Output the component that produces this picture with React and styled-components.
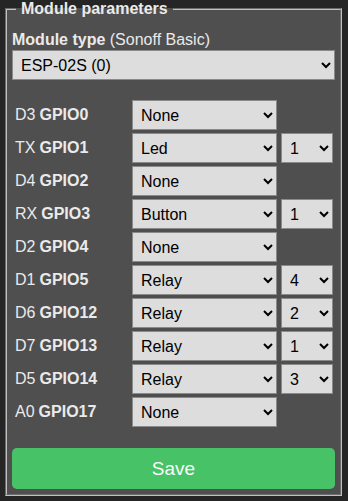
import React from "react";
import styled, { createGlobalStyle } from "styled-components";

const Global = createGlobalStyle`
  html, body { margin: 0; padding: 0; background: #252525; }
  body { font-family: "Liberation Sans", Arial, sans-serif; color: #eaeaea; font-size: 16px; }
`;

const Page = styled.div`
  padding: 0 6px 0 5px;
  width: 348px;
  height: 501px;
  box-sizing: border-box;
`;

const Fieldset = styled.fieldset`
  margin: 0;
  padding: 0 5px 5px;
  border: 2px groove #c0c0c0;
  background: #4f4f4f;
  min-width: 0;
  box-sizing: border-box;
  width: 337px;
`;

const Legend = styled.legend`
  font-weight: bold;
  font-size: 16px;
  padding: 0 5px;
  margin-left: 4px;
  line-height: 18px;
`;

const TypeLabel = styled.div`
  margin-top: 12px;
  line-height: 20px;
  b { font-weight: bold; }
`;

const Select = styled.select`
  font-family: "Liberation Sans", Arial, sans-serif;
  font-size: 16px;
  height: ${(p) => p.$h || 30}px;
  width: 100%;
  background: #dddddd;
  color: #000;
  border: 1px solid #8a8a8a;
  border-radius: 0;
  padding: 0 4px;
  box-sizing: border-box;
  margin: 0;
`;

const Grid = styled.div`
  display: grid;
  grid-template-columns: 116px 145px 52px;
  column-gap: 4px;
  row-gap: 3px;
  margin-top: 20px;
`;

const PinLabel = styled.div`
  display: flex;
  align-items: center;
  padding-left: 3px;
  white-space: nowrap;
  b { font-weight: bold; margin-left: 4px; }
`;

const Empty = styled.div``;

const SaveButton = styled.button`
  display: block;
  width: 100%;
  height: 41px;
  margin-top: 21px;
  border: 0;
  border-radius: 0.3rem;
  background: #47c266;
  color: #fafafa;
  font-family: "Liberation Sans", Arial, sans-serif;
  font-size: 19px;
  cursor: pointer;
`;

const rows = [
  ["D3", "GPIO0", "None", null],
  ["TX", "GPIO1", "Led", "1"],
  ["D4", "GPIO2", "None", null],
  ["RX", "GPIO3", "Button", "1"],
  ["D2", "GPIO4", "None", null],
  ["D1", "GPIO5", "Relay", "4"],
  ["D6", "GPIO12", "Relay", "2"],
  ["D7", "GPIO13", "Relay", "1"],
  ["D5", "GPIO14", "Relay", "3"],
  ["A0", "GPIO17", "None", null],
];

const funcs = ["None", "Button", "Relay", "Led", "Switch"];
const idx = ["1", "2", "3", "4", "5", "6", "7", "8"];

export default function App() {
  return (
    <Page>
      <Global />
      <Fieldset>
        <Legend>Module parameters</Legend>
        <TypeLabel>
          <b>Module type</b> (Sonoff Basic)
        </TypeLabel>
        <Select $h={30} defaultValue="ESP-02S (0)">
          <option>Sonoff Basic (1)</option>
          <option>ESP-02S (0)</option>
        </Select>
        <Grid>
          {rows.map(([pin, gpio, fn, n]) => (
            <React.Fragment key={gpio}>
              <PinLabel>
                {pin}
                <b>{gpio}</b>
              </PinLabel>
              <Select defaultValue={fn}>
                {funcs.map((f) => (
                  <option key={f}>{f}</option>
                ))}
              </Select>
              {n ? (
                <Select defaultValue={n}>
                  {idx.map((i) => (
                    <option key={i}>{i}</option>
                  ))}
                </Select>
              ) : (
                <Empty />
              )}
            </React.Fragment>
          ))}
        </Grid>
        <SaveButton>Save</SaveButton>
      </Fieldset>
    </Page>
  );
}
